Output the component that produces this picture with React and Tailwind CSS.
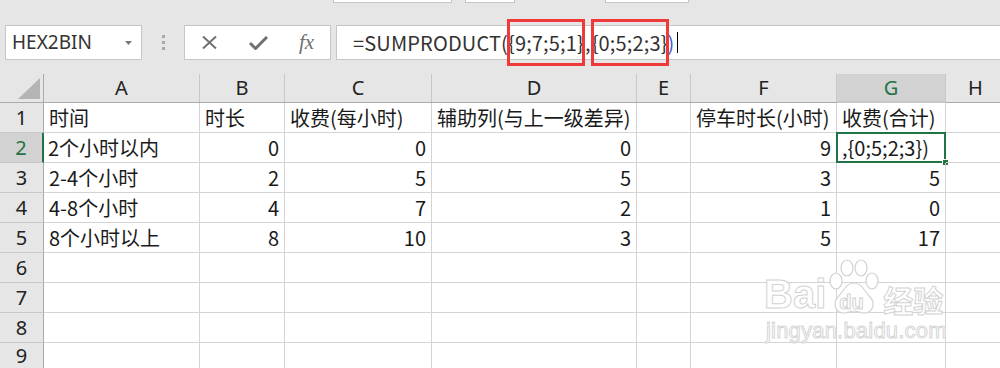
import React from 'react';

const cols = [
    { key: 'A', w: 'w-[156px]' },
    { key: 'B', w: 'w-[85px]' },
    { key: 'C', w: 'w-[147px]' },
    { key: 'D', w: 'w-[205px]' },
    { key: 'E', w: 'w-[54px]' },
    { key: 'F', w: 'w-[146px]' },
    { key: 'G', w: 'w-[109px]' },
    { key: 'H', w: 'w-[60px]' },
];

const rows = [
    ['时间', '时长', '收费(每小时)', '辅助列(与上一级差异)', '', '停车时长(小时)', '收费(合计)', ''],
    ['2个小时以内', 0, 0, 0, '', 9, ',{0;5;2;3})', ''],
    ['2-4个小时', 2, 5, 5, '', 3, 5, ''],
    ['4-8个小时', 4, 7, 2, '', 1, 0, ''],
    ['8个小时以上', 8, 10, 3, '', 5, 17, ''],
    ['', '', '', '', '', '', '', ''],
    ['', '', '', '', '', '', '', ''],
    ['', '', '', '', '', '', '', ''],
    ['', '', '', '', '', '', '', ''],
];

const cellFont = "font-['Noto_Sans_CJK_SC','Noto_Sans',sans-serif]";

const Toolbar = () => (
    <div className="h-[74px] bg-[#e6e6e6] flex flex-col">
        {/* bottom edges of the ribbon above */}
        <div className="h-[3px] flex">
            <div className="w-[333px]" />
            <div className="w-[119px] bg-white border-x border-b border-[#c6c6c6]" />
            <div className="w-[13px]" />
            <div className="w-[50px] bg-white border-x border-b border-[#c6c6c6]" />
            <div className="w-[90px]" />
            <div className="w-[84px] bg-white border-x border-b border-[#c6c6c6]" />
        </div>

        <div className="mt-[22px] h-[35px] flex items-stretch pl-[5px]">
            <div className="w-[137px] bg-white border border-[#c6c6c6] flex items-center justify-between pl-[6px] pr-[9px]">
                <span className="text-[19px] text-[#333] font-['Noto_Sans',sans-serif] leading-none">HEX2BIN</span>
                <svg width="7" height="4" viewBox="0 0 7 4"><path d="M0 0h7L3.5 4z" fill="#777" /></svg>
            </div>
            <div className="w-[42px] flex flex-col items-center justify-center gap-[3px]">
                <span className="w-[3px] h-[3px] bg-[#a8a8a8]" />
                <span className="w-[3px] h-[3px] bg-[#a8a8a8]" />
                <span className="w-[3px] h-[3px] bg-[#a8a8a8]" />
            </div>
            <div className="w-[147px] bg-white border border-[#c6c6c6] flex items-center">
                <div className="w-[48px] flex justify-center">
                    <svg width="15" height="13" viewBox="0 0 15 13">
                        <path d="M1 0.5L14 12.5M14 0.5L1 12.5" stroke="#707070" strokeWidth="2" />
                    </svg>
                </div>
                <div className="w-[50px] flex justify-center">
                    <svg width="19" height="14" viewBox="0 0 19 14">
                        <path d="M1 7l5.5 5.5L18 1" stroke="#707070" strokeWidth="3" fill="none" />
                    </svg>
                </div>
                <div className="w-[47px] flex justify-center">
                    <span className="font-['Liberation_Serif',serif] italic text-[21px] leading-none text-[#707070]">fx</span>
                </div>
            </div>
            <div className="ml-[5px] flex-1 bg-white border border-[#c6c6c6] border-r-0 flex items-center pl-[16px]">
                <span className={`${cellFont} text-[20px] leading-none text-[#333] whitespace-nowrap flex items-center tracking-[0.15px]`}>
                    =SUMPRODUCT(
                    <span className="relative">
                        {'{9;7;5;1}'}
                        <span className="absolute -left-[1px] -right-[1px] -top-[14px] -bottom-[13px] border-[3px] border-[#f03a3a]" />
                    </span>
                    <span className="px-[1px]">,</span>
                    <span className="relative">
                        {'{0;5;2;3}'}
                        <span className="absolute -left-[1px] -right-[1px] -top-[14px] -bottom-[13px] border-[3px] border-[#f03a3a]" />
                    </span>
                    <span className="text-[#2f5fd0]">)</span>
                    <span className="ml-[2px] w-px h-[21px] bg-black" />
                </span>
            </div>
        </div>
    </div>
);

const Watermark = () => (
    <div className="absolute left-[764px] top-[258px] flex flex-col items-start pointer-events-none select-none">
        <div className="flex items-end h-[57px]">
            <span className="font-['Liberation_Sans',sans-serif] font-bold text-[40px] leading-none text-white [-webkit-text-stroke:1px_#d2d2d2] mb-[1px]">Bai</span>
            <div className="relative w-[56px] h-[56px]">
                <svg width="56" height="56" viewBox="0 0 56 56" className="absolute inset-0">
                    <g fill="#fff" stroke="#d2d2d2" strokeWidth="1.2">
                        <ellipse cx="10" cy="22" rx="6" ry="8" />
                        <ellipse cx="21" cy="9" rx="6" ry="8" />
                        <ellipse cx="35" cy="9" rx="6" ry="8" />
                        <ellipse cx="46" cy="22" rx="6" ry="8" />
                        <path d="M28 24c-8 0-10 8-16 14-5 5-4 16 6 16 4 0 7-2 10-2s6 2 10 2c10 0 11-11 6-16-6-6-8-14-16-14z" />
                    </g>
                </svg>
                <span className="absolute left-[13px] top-[33px] font-['Liberation_Sans',sans-serif] font-bold text-[20px] leading-none text-white [-webkit-text-stroke:1px_#d2d2d2]">du</span>
            </div>
            <span className="ml-[1px] font-['Noto_Sans_CJK_SC',sans-serif] font-bold text-[30px] leading-none text-white [-webkit-text-stroke:1px_#d2d2d2] mb-[1px]">经验</span>
        </div>
        <span className="mt-[5px] ml-[2px] font-['Liberation_Sans',sans-serif] text-[22px] leading-none text-white [-webkit-text-stroke:1px_#d6d6d6] tracking-[0.2px]">jingyan.baidu.com</span>
    </div>
);

const Sheet = () => (
    <div className={`${cellFont} text-[20px] text-[#1a1a1a]`}>
        {/* column headers */}
        <div className="flex h-[29px] bg-[#e6e6e6] border-b border-[#ababab]">
            <div className="w-[44px] shrink-0 border-r border-[#ababab] flex items-end justify-end pr-[3px] pb-[3px]">
                <svg width="22" height="21" viewBox="0 0 22 21"><path d="M22 0v21H0z" fill="#b4b4b4" /></svg>
            </div>
            {cols.map((c) => (
                <div
                    key={c.key}
                    className={`${c.w} shrink-0 flex items-center justify-center font-['Noto_Sans',sans-serif] text-[20px] ${c.key === 'G' ? 'bg-[#d2d2d2] text-[#217346] border-b-2 border-[#217346] -mb-px' : 'text-[#222]'} border-r border-[#c8c8c8]`}
                >
                    {c.key}
                </div>
            ))}
        </div>

        {rows.map((r, i) => (
            <div key={i} className={`flex ${i === rows.length - 1 ? 'h-[26px]' : 'h-[30px]'}`}>
                <div className={`w-[44px] shrink-0 flex items-center justify-center border-b font-['Noto_Sans',sans-serif] ${i === 1 ? 'bg-[#d2d2d2] text-[#217346] border-r-2 border-r-[#217346] border-b-[#c8c8c8]' : 'bg-[#e6e6e6] text-[#222] border-r border-r-[#ababab] border-b-[#c8c8c8]'}`}>
                    {i + 1}
                </div>
                {r.map((v, j) => {
                    const isNum = typeof v === 'number';
                    const selected = i === 1 && j === 6;
                    return (
                        <div
                            key={j}
                            className={`${cols[j].w} shrink-0 relative flex items-center border-r border-b border-[#d4d4d4] px-[5px] whitespace-nowrap ${isNum ? 'justify-end' : 'justify-start'} ${j === 0 && i === 1 ? 'pl-[4px]' : ''}`}
                        >
                            <span className="leading-none pt-[1px]">{v}</span>
                            {selected && (
                                <>
                                    <span className="absolute -left-[1px] -top-[1px] -right-px -bottom-px border-2 border-[#217346]" />
                                    <span className="absolute -right-[4px] -bottom-[4px] w-[7px] h-[7px] bg-[#217346] border border-white" />
                                </>
                            )}
                        </div>
                    );
                })}
            </div>
        ))}
    </div>
);

export default function App() {
    return (
        <div className="relative w-[1000px] h-[368px] overflow-hidden bg-white">
            <Toolbar />
            <Sheet />
            <Watermark />
        </div>
    );
}
